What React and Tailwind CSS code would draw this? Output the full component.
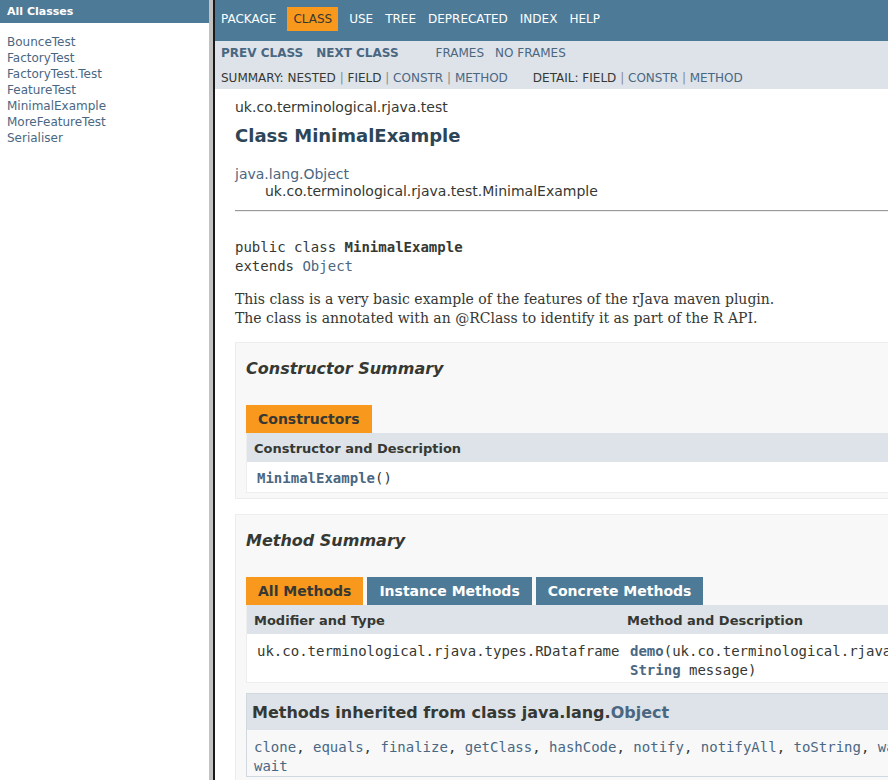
import React from 'react';

const sans = "font-['DejaVu_Sans',sans-serif]";
const mono = "font-['DejaVu_Sans_Mono',monospace]";
const serif = "font-['DejaVu_Serif',serif]";

const classes = ['BounceTest', 'FactoryTest', 'FactoryTest.Test', 'FeatureTest', 'MinimalExample', 'MoreFeatureTest', 'Serialiser'];
const inherited = ['clone', 'equals', 'finalize', 'getClass', 'hashCode', 'notify', 'notifyAll', 'toString', 'wait', 'wait'];

const Sep = () => <span className="text-[#8a8a8a]"> | </span>;

export default function App() {
  return (
    <div className={`flex h-[780px] w-[888px] overflow-hidden bg-white text-[#353833] ${sans}`}>
      {/* class list frame */}
      <div className="w-[209px] shrink-0">
        <div className="h-[23px] bg-[#4d7a97] pl-[7px] text-[11px] font-bold leading-[24px] text-white">All Classes</div>
        <ul className="pl-[7px] pt-[11px] text-[12px] leading-[16px] text-[#4a6782]">
          {classes.map((c) => (
            <li key={c}>{c}</li>
          ))}
        </ul>
      </div>
      <div className="w-[4px] shrink-0 bg-[#c2c2c2]" />
      <div className="w-[2px] shrink-0 bg-[#1a1a1a]" />

      {/* class frame */}
      <div className="min-w-0 flex-1 overflow-hidden">
        <div className="flex h-[41px] items-start bg-[#4d7a97] pt-[7px] text-[12px] uppercase leading-[14px] text-white">
          <span className="px-[6px] py-[5px]">Package</span>
          <span className="ml-[5px] bg-[#f8981d] px-[6px] py-[5px] text-[#353833]">Class</span>
          <span className="ml-[5px] px-[6px] py-[5px]">Use</span>
          <span className="px-[6px] py-[5px]">Tree</span>
          <span className="px-[6px] py-[5px]">Deprecated</span>
          <span className="px-[6px] py-[5px]">Index</span>
          <span className="px-[6px] py-[5px]">Help</span>
        </div>
        <div className="h-[48px] bg-[#dee3e9] pl-[6px] text-[12px] uppercase leading-[14px]">
          <div className="flex pt-[5px] text-[#4a6782]">
            <span className="font-bold">Prev Class</span>
            <span className="ml-[13px] font-bold">Next Class</span>
            <span className="ml-[37px]">Frames</span>
            <span className="ml-[11px]">No Frames</span>
          </div>
          <div className="flex pt-[11px] whitespace-pre">
            <span>
              Summary: Nested<Sep />Field<Sep /><span className="text-[#4a6782]">Constr</span><Sep /><span className="text-[#4a6782]">Method</span>
            </span>
            <span className="ml-[25px]">
              Detail: Field<Sep /><span className="text-[#4a6782]">Constr</span><Sep /><span className="text-[#4a6782]">Method</span>
            </span>
          </div>
        </div>

        <div className="w-[1100px] pl-[20px]">
          <div className="mt-[10px] text-[14px] leading-[17px]">uk.co.terminological.rjava.test</div>
          <h2 className="mt-[9px] text-[18px] font-bold leading-[22px] text-[#2c4557]">Class MinimalExample</h2>
          <div className="mt-[19px] text-[14px] leading-[17px]">
            <div className="text-[#4a6782]">java.lang.Object</div>
            <div className="pl-[30px]">uk.co.terminological.rjava.test.MinimalExample</div>
          </div>
          <div className="mt-[10px] border-t border-b border-t-[#9a9a9a] border-b-[#eeeeee]" />

          <pre className={`mt-[26px] text-[14px] leading-[19px] ${mono}`}>
            public class <b>MinimalExample</b>
            {'\n'}extends <span className="text-[#4a6782]">Object</span>
          </pre>
          <div className={`mt-[14px] text-[14px] leading-[19px] ${serif}`}>
            <div>This class is a very basic example of the features of the rJava maven plugin.</div>
            <div>The class is annotated with an @RClass to identify it as part of the R API.</div>
          </div>

          {/* constructor summary */}
          <div className="mt-[14px] border border-[#ededed] bg-[#f8f8f8] pb-[5px] pl-[10px]">
            <h3 className="mt-[16px] text-[16px] font-bold italic leading-[20px]">Constructor Summary</h3>
            <div className="mt-[26px] flex">
              <div className="bg-[#f8981d] px-[12px] text-[14px] font-bold leading-[28px]">Constructors</div>
            </div>
            <div className="border border-t-0 border-[#eeeeee] bg-white">
              <div className="bg-[#dee3e9] pl-[7px] pt-[3px] text-[13px] font-bold leading-[26px]">Constructor and Description</div>
              <div className={`pl-[10px] pt-[3px] text-[14px] leading-[27px] ${mono}`}>
                <span className="font-bold text-[#4a6782]">MinimalExample</span>()
              </div>
            </div>
          </div>

          {/* method summary */}
          <div className="mt-[15px] border border-[#ededed] bg-[#f8f8f8] pb-[5px] pl-[10px]">
            <h3 className="mt-[16px] text-[16px] font-bold italic leading-[20px]">Method Summary</h3>
            <div className="mt-[26px] flex gap-[4px] text-[14px] font-bold leading-[28px]">
              <div className="bg-[#f8981d] px-[12px]">All Methods</div>
              <div className="bg-[#4d7a97] px-[12px] text-white">Instance Methods</div>
              <div className="bg-[#4d7a97] px-[12px] text-white">Concrete Methods</div>
            </div>
            <div className="border border-t-0 border-[#eeeeee] bg-white">
              <div className="flex bg-[#dee3e9] pt-[3px] text-[13px] font-bold leading-[26px]">
                <div className="w-[373px] pl-[7px]">Modifier and Type</div>
                <div className="pl-[7px]">Method and Description</div>
              </div>
              <div className={`flex pt-[8px] pb-[2px] text-[14px] leading-[19px] ${mono}`}>
                <div className="w-[373px] pl-[10px]">uk.co.terminological.rjava.types.RDataframe</div>
                <div className="pl-[10px]">
                  <div><span className="font-bold text-[#4a6782]">demo</span>(uk.co.terminological.rjava.types.RDataframe dataframe,</div>
                  <div><span className="font-bold text-[#4a6782]">String</span> message)</div>
                </div>
              </div>
            </div>

            <div className="mt-[10px] border border-[#d0d9e0]">
              <h3 className="bg-[#dee3e9] pl-[5px] pt-[1px] text-[16px] font-bold leading-[35px]">
                Methods inherited from class java.lang.<span className="text-[#4a6782]">Object</span>
              </h3>
              <div className={`pl-[7px] pt-[8px] text-[14px] leading-[19px] ${mono}`}>
                <div>
                  {inherited.map((m, i) => (
                    <span key={i}><span className="text-[#4a6782]">{m}</span>, </span>
                  ))}
                </div>
                <div className="text-[#4a6782]">wait</div>
              </div>
            </div>
          </div>
        </div>
      </div>
    </div>
  );
}
